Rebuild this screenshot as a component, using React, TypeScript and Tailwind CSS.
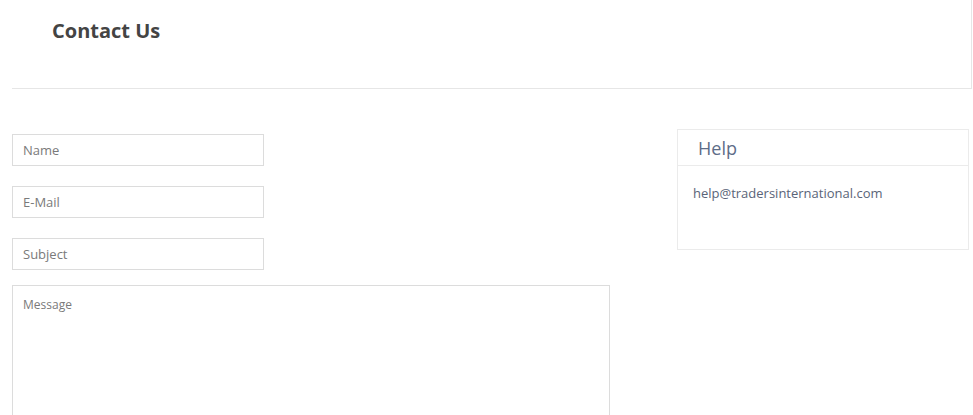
import React from "react";

export default function App() {
  return (
    <div className="w-[973px] h-[415px] overflow-hidden bg-white" style={{ fontFamily: '"Open Sans", sans-serif' }}>
      <div className="ml-[12px] mr-[1px] h-[89px] border-b border-r border-[#e6e6e6] pl-[40px] pt-[17px]">
        <h1 className="text-[20px] leading-[28px] font-bold text-[#444]">Contact Us</h1>
      </div>
      <div className="flex pl-[12px] pt-[40px]">
        <div className="w-[598px] flex flex-col">
          <div className="mt-[5px] w-[252px] h-[32px] border border-[#dcdcdc] pl-[10px] pt-[2px] flex items-center text-[13px] text-[#7a7a7a]">Name</div>
          <div className="mt-[20px] w-[252px] h-[32px] border border-[#dcdcdc] pl-[10px] pt-[2px] flex items-center text-[13px] text-[#7a7a7a]">E-Mail</div>
          <div className="mt-[20px] w-[252px] h-[32px] border border-[#dcdcdc] pl-[10px] pt-[2px] flex items-center text-[13px] text-[#7a7a7a]">Subject</div>
          <div className="mt-[15px] w-[598px] h-[160px] border border-[#dcdcdc] pl-[10px] pt-[10px] text-[12px] leading-[17px] text-[#7a7a7a]">Message</div>
        </div>
        <div className="ml-[67px] w-[292px] h-[121px] border border-[#ebebeb] self-start">
          <div className="h-[36px] border-b border-[#ebebeb] pl-[20px] pt-[2px] flex items-center text-[18px] text-[#5d6d88]">Help</div>
          <div className="pl-[15px] pt-[18px] text-[13px] text-[#5a6478]">help@tradersinternational.com</div>
        </div>
      </div>
    </div>
  );
}
